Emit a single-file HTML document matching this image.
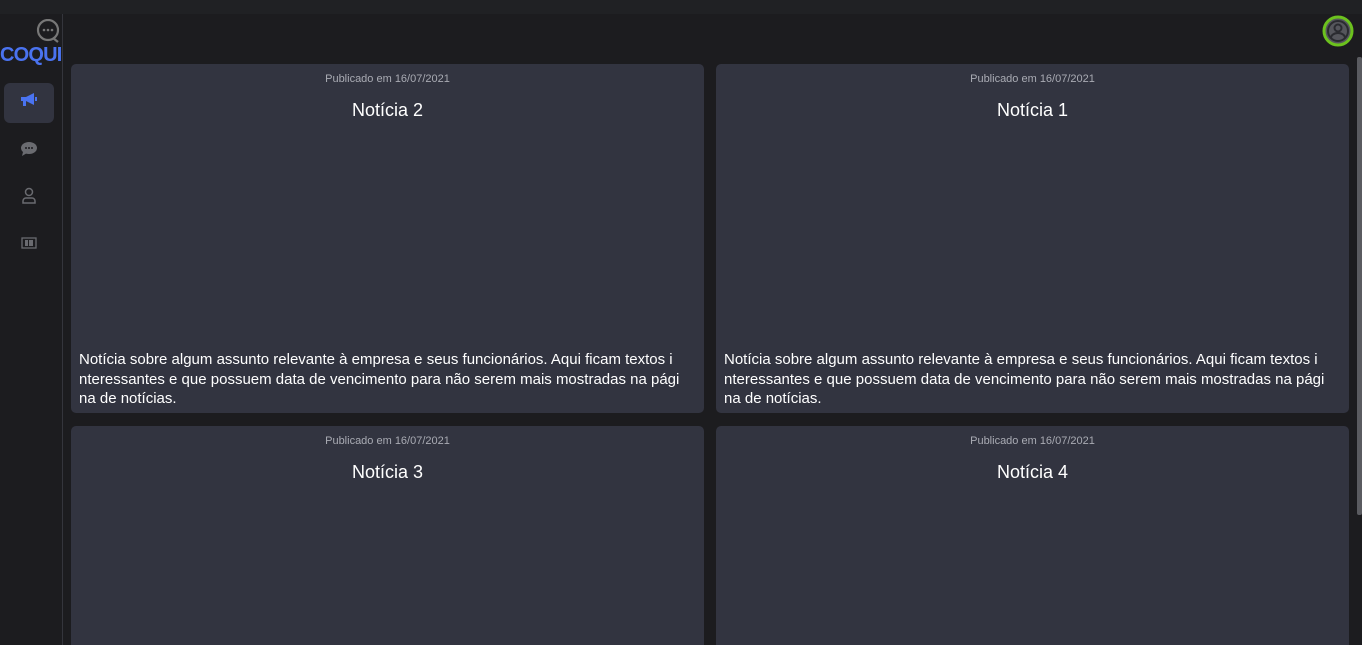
<!DOCTYPE html>
<html><head><meta charset="utf-8"><style>
*{margin:0;padding:0;box-sizing:border-box}
html,body{width:1362px;height:645px;overflow:hidden}
body{background:#1c1c1f;font-family:"Liberation Sans",sans-serif;position:relative;color:#fff}
.top{position:absolute;left:0;top:0;width:1362px;height:14px;background:#202124}
.side{position:absolute;left:0;top:14px;width:63px;height:631px;background:#1c1c1f;border-right:1px solid #34353c}
.card{position:absolute;width:633px;background:#323440;border-radius:5px}
.pub{position:absolute;top:9px;width:100%;text-align:center;font-size:11px;color:#a9abb3}
.tt{position:absolute;top:36px;width:100%;text-align:center;font-size:18px;color:#fff}
.desc{position:absolute;left:8px;top:286px;font-size:15px;line-height:19.5px;white-space:nowrap;color:#fff}
.sb{position:absolute;right:0;top:57px;width:5px;height:458px;background:#5a5b60;border-radius:2px}
</style></head><body>
<div class="top"></div>
<div class="side">
<svg style="position:absolute;left:36px;top:5px" width="26" height="26" viewBox="0 0 26 26"><circle cx="12" cy="11" r="10" fill="none" stroke="#777" stroke-width="2.2"/><path d="M17 19l5 4" stroke="#777" stroke-width="2.2"/><circle cx="8" cy="11" r="1.3" fill="#777"/><circle cx="12" cy="11" r="1.3" fill="#777"/><circle cx="16" cy="11" r="1.3" fill="#777"/></svg>
<div style="position:absolute;left:0;top:30px;font-size:20px;font-weight:bold;color:#4a73f0;letter-spacing:-0.8px">COQUI</div>
<div style="position:absolute;left:4px;top:69px;width:50px;height:40px;background:#323440;border-radius:6px"></div>
<svg style="position:absolute;left:20px;top:78px" width="18" height="16" viewBox="0 0 18 16"><path d="M1 5h5l8-4v12l-8-4H1z" fill="#4a73f0"/><rect x="3" y="9" width="3" height="5" fill="#4a73f0"/><rect x="15" y="5" width="2" height="4" fill="#4a73f0"/></svg>
<svg style="position:absolute;left:20px;top:127px" width="18" height="16" viewBox="0 0 18 16"><ellipse cx="9" cy="7" rx="8" ry="6" fill="#6a6b70"/><path d="M3 11l-1 4 5-3z" fill="#6a6b70"/><circle cx="6" cy="7" r="1" fill="#1c1c1f"/><circle cx="9" cy="7" r="1" fill="#1c1c1f"/><circle cx="12" cy="7" r="1" fill="#1c1c1f"/></svg>
<svg style="position:absolute;left:21px;top:173px" width="16" height="18" viewBox="0 0 16 18"><circle cx="8" cy="5" r="3.5" fill="none" stroke="#6a6b70" stroke-width="1.5"/><path d="M2 16v-2a3 3 0 0 1 3-3h6a3 3 0 0 1 3 3v2z" fill="none" stroke="#6a6b70" stroke-width="1.5"/></svg>
<svg style="position:absolute;left:21px;top:223px" width="16" height="12" viewBox="0 0 16 12"><rect x="1" y="1" width="14" height="10" fill="none" stroke="#6a6b70" stroke-width="1.3"/><rect x="4" y="3" width="3" height="6" fill="#6a6b70"/><rect x="8" y="3" width="4" height="6" fill="#6a6b70"/></svg>
</div>
<svg style="position:absolute;left:1322px;top:15px" width="32" height="32" viewBox="0 0 32 32"><circle cx="16" cy="16" r="14" fill="#55565c" stroke="#6cc21e" stroke-width="3"/><circle cx="16" cy="13" r="3.5" fill="none" stroke="#2a2b30" stroke-width="2"/><path d="M9 23a7 5 0 0 1 14 0" fill="none" stroke="#2a2b30" stroke-width="2"/><circle cx="16" cy="16" r="10" fill="none" stroke="#2a2b30" stroke-width="2"/></svg>
<div class="sb"></div>
<div class="card" style="left:71px;top:64px;height:349px"><div class="pub">Publicado em 16/07/2021</div><div class="tt">Notícia 2</div><div class="desc">Notícia sobre algum assunto relevante à empresa e seus funcionários. Aqui ficam textos i<br>nteressantes e que possuem data de vencimento para não serem mais mostradas na pági<br>na de notícias.</div></div>
<div class="card" style="left:716px;top:64px;height:349px"><div class="pub">Publicado em 16/07/2021</div><div class="tt">Notícia 1</div><div class="desc">Notícia sobre algum assunto relevante à empresa e seus funcionários. Aqui ficam textos i<br>nteressantes e que possuem data de vencimento para não serem mais mostradas na pági<br>na de notícias.</div></div>
<div class="card" style="left:71px;top:426px;height:219px;border-radius:5px 5px 0 0"><div class="pub">Publicado em 16/07/2021</div><div class="tt">Notícia 3</div></div>
<div class="card" style="left:716px;top:426px;height:219px;border-radius:5px 5px 0 0"><div class="pub">Publicado em 16/07/2021</div><div class="tt">Notícia 4</div></div>
</body></html>
